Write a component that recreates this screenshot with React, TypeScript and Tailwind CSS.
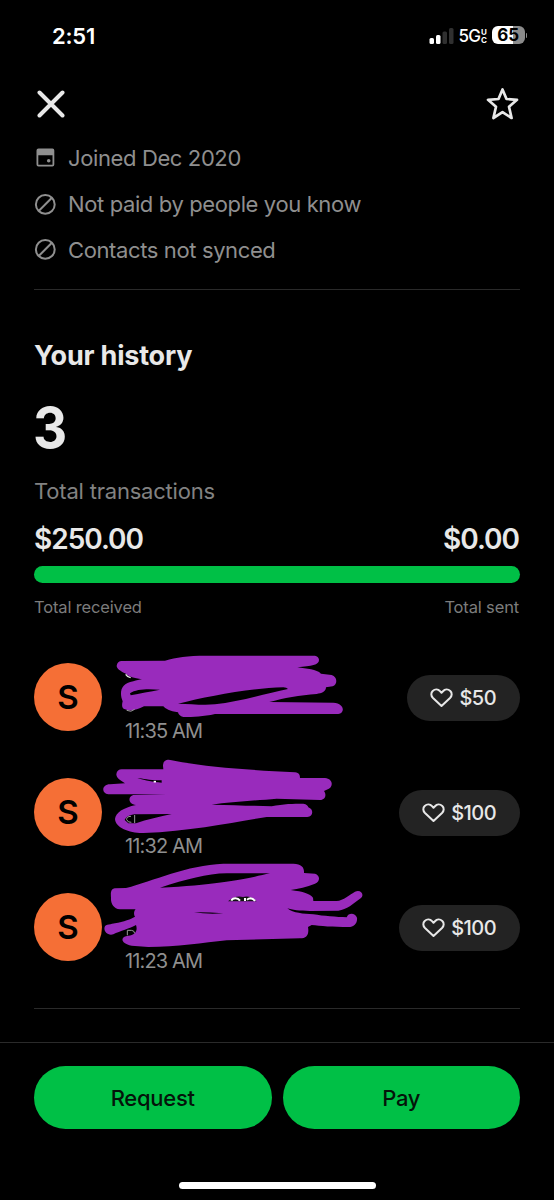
import type { ReactNode } from "react";

type Transaction = {
  time: string;
  amount: string;
  scribble: ReactNode;
  scribbleClass: string;
};

const PURPLE = "#992bbc";

const transactions: Transaction[] = [
  {
    time: "11:35 AM",
    amount: "$50",
    scribbleClass: "-top-[23.5px]",
    scribble: (
      <>
        <path
          fill={PURPLE}
          fillRule="evenodd"
          d="M305 63L435 62C470 52 500 47 560 47L880 47C892 47 897 53 897 60C897 75 875 78 832 82C860 86 890 88 903 101L935 105C953 110 953 134 938 139L918 142C918 155 905 160 890 162C840 165 790 175 748 186L940 188C975 190 975 220 955 222L585 222C550 230 520 231 490 231C480 230 475 222 474 217C450 214 435 205 430 199L372 199C350 210 330 215 315 208C305 205 305 195 308 184C298 160 300 130 340 124C350 121 358 119 366 118C340 114 330 112 315 100C300 92 290 86 290 77C291 68 297 63 305 63ZM330 160C350 145 390 147 420 149C390 155 360 160 332 166ZM474 191C560 170 680 145 790 142Q800 143 804 147C740 160 660 185 585 193C550 196 510 192 474 191Z"
        />
        <path d="M317 103Q322 111 332 113" fill="none" stroke="#e8e8e8" strokeWidth="4" />
        <path d="M320 211Q333 218 344 208" fill="none" stroke="#999" strokeWidth="3" />
      </>
    ),
  },
  {
    time: "11:32 AM",
    amount: "$100",
    scribbleClass: "-top-[32.5px]",
    scribble: (
      <>
        <path
          fill={PURPLE}
          fillRule="evenodd"
          d="M305 70L430 70L429 60C429 40 445 40 455 43C550 62 680 72 825 79C838 80 840 88 840 96L915 96C940 98 942 125 920 131L912 135C920 145 917 162 900 162L770 158C710 163 630 168 575 176C640 178 700 179 755 181C790 173 820 173 850 173C860 174 864 180 865 184C882 190 880 212 862 213L740 213C640 228 520 255 370 261C330 262 286 245 285 219C287 200 310 185 348 177C325 175 322 152 340 147L440 145L265 145C243 143 245 115 270 115L315 112C295 100 290 95 289 85C290 75 297 70 305 70ZM314 222C320 210 335 205 350 205L455 204C420 212 380 220 348 232L325 232ZM352 97C370 97 390 104 425 103L425 110C395 108 380 104 352 97Z"
        />
        <path d="M333 211Q319 211 320 221Q323 230 334 229M344 207V231" fill="none" stroke="#999" strokeWidth="3" />
        <path d="M401 107H408" fill="none" stroke="#fff" strokeWidth="5" />
      </>
    ),
  },
  {
    time: "11:23 AM",
    amount: "$100",
    scribbleClass: "-top-[42.5px]",
    scribble: (
      <>
        <path
          fill={PURPLE}
          fillRule="evenodd"
          d="M285 112L318 111C400 90 500 42 610 38L820 38C845 40 853 48 852 66L885 68C900 72 902 92 885 98C860 108 835 113 812 117C850 122 870 128 879 140L880 150L950 150C970 149 990 130 1005 122C1022 113 1035 132 1022 142C1000 158 980 177 955 179L870 180C840 180 815 177 802 172C820 187 850 188 880 190C910 195 950 198 980 199C985 185 1005 185 1011 200C1013 215 1003 228 985 228C940 228 900 225 875 222L864 228C868 250 860 262 840 262L620 268C550 275 470 288 385 288L335 284C300 278 300 255 325 254C345 252 354 240 348 222C330 232 300 240 280 250C262 255 250 240 254 228C256 220 275 220 285 217C310 213 335 203 345 197C340 190 342 180 347 175L300 175C280 172 272 158 273 140C272 125 272 114 285 112ZM420 110C500 85 560 68 620 67L750 67C690 80 620 100 420 110ZM522 184Q560 190 610 187Q560 183 522 184Z"
        />
        <path d="M624 151Q646 132 669 138Q690 132 710 151Z" fill="#111" />
        <path
          d="M634 149Q637 142 646 142Q655 142 660 149M675 150V141M681 146Q686 142 692 142Q700 143 705 150"
          fill="none"
          stroke="#fff"
          strokeWidth="6"
        />
        <path d="M322 253V238H334Q343 238 344 247" fill="none" stroke="#999" strokeWidth="3" />
      </>
    ),
  },
];

function StatusBar() {
  return (
    <div className="flex h-[72px] items-center justify-between pl-[52px] pr-[27px] text-white">
      <span className="text-[22px] font-semibold leading-none tracking-[-0.2px]">2:51</span>
      <div className="flex items-center">
        {/* Signal strength */}
        <svg width="25" height="18" viewBox="0 0 25 18" className="mr-[5px]">
          <rect x="0.5" y="11" width="4.5" height="6" rx="1.5" fill="#fff" />
          <rect x="7" y="8" width="4.5" height="9" rx="1.5" fill="#fff" />
          <rect x="13.5" y="4.5" width="4.5" height="12.5" rx="1.5" fill="#303030" />
          <rect x="20" y="1" width="4.5" height="16" rx="1.5" fill="#303030" />
        </svg>
        <span className="text-[17px] font-medium leading-none tracking-[-0.9px]">5G</span>
        <span className="mr-[5px] ml-[1px] flex w-[6px] flex-col text-[8px] font-bold leading-[8px]">
          <span>U</span>
          <span>C</span>
        </span>
        {/* Battery */}
        <span className="-mt-[2px] flex h-[18px] w-[32.5px] items-center justify-center rounded-[6px] bg-linear-to-r from-white from-65% to-[#8b8b8b] to-65% text-[17px] font-bold leading-none text-black">
          65
        </span>
        <span className="-mt-[2px] ml-[1px] h-[5px] w-[1.5px] rounded-r-full bg-[#8b8b8b]" />
      </div>
    </div>
  );
}

function CalendarIcon() {
  return (
    <svg width="22" height="22" viewBox="0 0 22 22">
      <path
        fill="#8f8f8f"
        fillRule="evenodd"
        d="M4.5 .5H18.5A2 2 0 0 1 20.3 2.5V16.5A2 2 0 0 1 18.3 18.5H4.5A2 2 0 0 1 2.5 16.5V2.5A2 2 0 0 1 4.5 .5ZM4.3 7.2V16.7H18.5V7.2Z"
      />
      <circle cx="14.7" cy="12.8" r="1.8" fill="#8f8f8f" />
    </svg>
  );
}

function BlockedIcon() {
  return (
    <svg width="22" height="22" viewBox="0 0 22 22" fill="none" stroke="#8f8f8f" strokeWidth="2">
      <circle cx="11.3" cy="10.4" r="9.4" />
      <path d="M4.7 17L17.9 3.8" />
    </svg>
  );
}

function InfoRow({ icon, children }: { icon: ReactNode; children: ReactNode }) {
  return (
    <div className="flex h-[45.7px] items-center gap-3">
      {icon}
      <span className="-mt-px text-[22px] leading-none tracking-[-0.38px] text-[#8f8f8f]">{children}</span>
    </div>
  );
}

function TransactionRow({ time, amount, scribble, scribbleClass }: Transaction) {
  return (
    <div className="relative flex h-[68px] items-center justify-between">
      <div className="flex h-full">
        <div className="flex size-[68px] items-center justify-center rounded-full bg-[#f56f36] pt-px text-[33px] font-semibold text-black">
          S
        </div>
        <span className="ml-[23px] mt-[56.5px] h-[22px] text-[20px] leading-[22px] tracking-[-0.85px] text-[#8f8f8f]">
          {time}
        </span>
      </div>
      <div className="mt-px flex h-[46px] items-center gap-[6px] rounded-full bg-[#232323] pl-[23px] pr-[24px] text-[#e8e8e8]">
        <svg width="23" height="20" viewBox="0 0 23 20" fill="none" stroke="currentColor" strokeWidth="2" strokeLinejoin="round">
          <path d="M11.5 18L3 10C.8 7.8 .8 4.8 2.7 3C5 1 8.2 1.2 10 3.2L11.5 4.8L13 3.2C14.8 1.2 18 1 20.3 3C22.2 4.8 22.2 7.8 20 10Z" />
        </svg>
        <span className="pt-px text-[20px] font-medium tracking-[-0.55px]">{amount}</span>
      </div>
      <svg className={`absolute -left-[14px] ${scribbleClass}`} width="350" height="110" viewBox="0 0 1050 330">
        {scribble}
      </svg>
    </div>
  );
}

export default function App() {
  return (
    <div className="flex h-[1200px] w-[554px] flex-col overflow-hidden bg-black font-['Inter',sans-serif] text-[#e8e8e8]">
      <StatusBar />

      <header className="flex h-[64px] items-center justify-between pl-[37px] pr-[35px]">
        <svg width="28" height="28" viewBox="0 0 28 28" fill="none" stroke="currentColor" strokeWidth="4" strokeLinecap="round">
          <path d="M2.5 2.5L25.5 25.5M25.5 2.5L2.5 25.5" />
        </svg>
        <svg width="33" height="34" viewBox="0 0 33 34" fill="none" stroke="currentColor" strokeWidth="2.7" strokeLinejoin="round">
          <path d="M16.5 2.5L20.5 12L31 12.8L23 19.7L25.6 31L16.5 25.2L7.4 31L10 19.7L2 12.8L12.5 12Z" />
        </svg>
      </header>

      <main className="px-[34px]">
        <InfoRow icon={<CalendarIcon />}>Joined Dec 2020</InfoRow>
        <InfoRow icon={<BlockedIcon />}>Not paid by people you know</InfoRow>
        <InfoRow icon={<BlockedIcon />}>Contacts not synced</InfoRow>

        <div className="mt-[15.5px] h-px bg-[#2a2a2a]" />

        {/* History */}
        <h2 className="mt-[48px] h-[36px] text-[27px] font-bold leading-[36px] tracking-[-0.2px]">Your history</h2>
        <p className="mt-[24px] h-[60px] -ml-[1px] origin-left scale-x-93 text-[57px] font-bold leading-[60px]">3</p>
        <p className="mt-[18.4px] h-[30px] text-[22px] leading-[30px] tracking-[-0.2px] text-[#828282]">Total transactions</p>
        <div className="mt-[15px] flex h-[36px] justify-between text-[28px] font-semibold leading-[36px] tracking-[-1px]">
          <span>$250.00</span>
          <span className="mr-px">$0.00</span>
        </div>
        <div className="mt-[9.5px] h-[17px] rounded-full bg-[#00c046]" />
        <div className="mt-[14px] flex h-[20px] justify-between text-[16.5px] leading-[20px] tracking-[-0.15px] text-[#7c7c7c]">
          <span>Total received</span>
          <span className="mr-px">Total sent</span>
        </div>

        <div className="mt-[46px] flex flex-col gap-[46.8px]">
          {transactions.map((t) => (
            <TransactionRow key={t.time} {...t} />
          ))}
        </div>

        <div className="mt-[47px] h-px bg-[#2a2a2a]" />
      </main>

      {/* Actions */}
      <footer className="mt-[33px] flex flex-1 flex-col items-center border-t border-[#2a2a2a] pt-[23px]">
        <div className="grid w-full grid-cols-2 gap-[11px] px-[34px] text-[22px] font-medium tracking-[-0.25px] text-[#04140a]">
          <button className="h-[63px] rounded-full bg-[#00c046] pt-[2px]">Request</button>
          <button className="h-[63px] rounded-full bg-[#00c046] pt-[2px]">Pay</button>
        </div>
        <div className="mt-[52.5px] h-[7px] w-[197px] rounded-full bg-white" />
      </footer>
    </div>
  );
}
